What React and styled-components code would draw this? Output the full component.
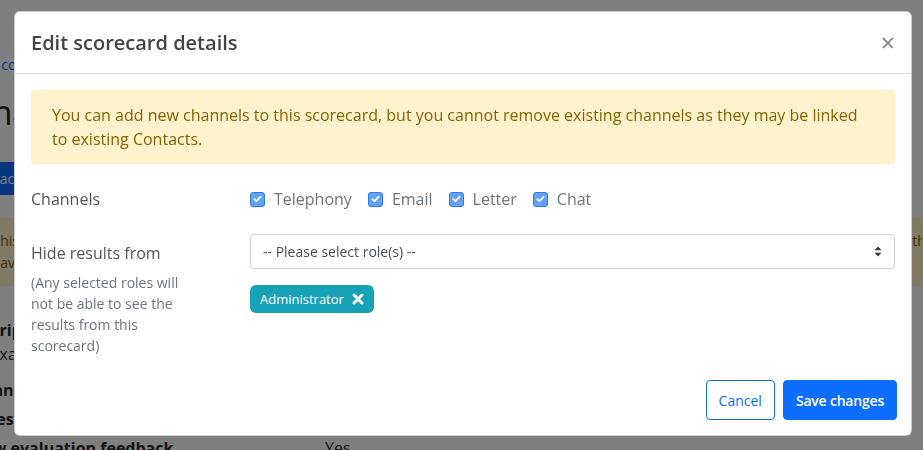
import React from "react";
import styled, { createGlobalStyle } from "styled-components";

const Global = createGlobalStyle`
  html, body { margin: 0; padding: 0; }
  body {
    font-family: "Open Sans", "Liberation Sans", sans-serif;
    color: #212529;
    background: #fff;
    overflow: hidden;
    width: 923px;
    height: 450px;
  }
`;

/* ---------- background page ---------- */
const Page = styled.div`
  margin-left: -38px;
  display: flex;
  flex-direction: column;
  align-items: flex-start;
`;
const BackLink = styled.a`
  margin-top: 54px;
  font-size: 14px;
  line-height: 21px;
  color: #0d6efd;
  text-decoration: none;
`;
const PageTitle = styled.h1`
  margin: 16px 0 0;
  font-size: 34px;
  line-height: 42px;
  font-weight: 500;
  color: #212529;
`;
const PageButton = styled.button`
  margin-top: 29px;
  height: 33px;
  padding: 0 12px;
  border: 0;
  border-radius: 4px;
  background: #0d6efd;
  color: #fff;
  font: 14px/21px "Open Sans", sans-serif;
`;
const PageAlert = styled.div`
  align-self: stretch;
  margin-top: 23px;
  padding: 11px 20px 11px 20px;
  background: #fff3cd;
  border: 1px solid #ffeeba;
  color: #856404;
  font-size: 14px;
  line-height: 22px;
  white-space: nowrap;
  overflow: hidden;
`;
const Details = styled.div`
  margin-top: 32px;
  font-size: 16px;
  line-height: 24px;
`;
const DetailLabel = styled.div`
  font-weight: 700;
`;
const DetailText = styled.div`
  margin-bottom: 12px;
`;
const DetailGrid = styled.div`
  display: grid;
  grid-template-columns: 363px auto;
  row-gap: 5px;
  font-size: 16px;
  line-height: 24px;
`;

/* ---------- modal ---------- */
const Backdrop = styled.div`
  position: fixed;
  inset: 0;
  background: rgba(0, 0, 0, 0.5);
  display: flex;
  align-items: flex-start;
  padding: 11px 0 0 14px;
`;
const Modal = styled.div`
  width: 898px;
  box-sizing: border-box;
  background: #fff;
  border: 1px solid rgba(0, 0, 0, 0.2);
  border-radius: 6px;
  display: flex;
  flex-direction: column;
`;
const Header = styled.div`
  display: flex;
  align-items: center;
  justify-content: space-between;
  padding: 16px 16px 15px;
  border-bottom: 1px solid #dee2e6;
`;
const Title = styled.h5`
  margin: 0;
  font-size: 20px;
  line-height: 30px;
  font-weight: 600;
  color: #444;
`;
const Close = styled.button`
  border: 0;
  background: none;
  padding: 0;
  margin-top: -3px;
  font: 400 25px/30px "Open Sans", sans-serif;
  color: #808080;
  cursor: pointer;
`;
const Body = styled.div`
  padding: 16px 16px 16px;
`;
const Alert = styled.div`
  padding: 12px 20px;
  background: #fff3cd;
  border: 1px solid #ffeeba;
  border-radius: 4px;
  color: #856404;
  font-size: 16px;
  line-height: 24px;
  margin-bottom: 16px;
`;
const FormRow = styled.div`
  display: grid;
  grid-template-columns: 219px 1fr;
  margin-bottom: ${(p) => (p.$last ? 0 : "16px")};
`;
const LabelCol = styled.div`
  display: flex;
  flex-direction: column;
`;
const Label = styled.label`
  padding: 7px 0;
  font-size: 16px;
  line-height: 24px;
  color: #555;
`;
const Help = styled.div`
  width: 160px;
  font-size: 14px;
  line-height: 21px;
  color: #6c757d;
`;
const Checks = styled.div`
  display: flex;
  align-items: center;
  gap: 16px;
  padding: 7px 0;
  height: 24px;
`;
const Check = styled.label`
  display: flex;
  align-items: center;
  gap: 9px;
  font-size: 16px;
  line-height: 24px;
  color: #6c757d;
`;
const Box = styled.span`
  width: 15px;
  height: 15px;
  box-sizing: border-box;
  border: 1px solid #2f7be8;
  border-radius: 3px;
  background: #62a1f5;
  display: flex;
  align-items: center;
  justify-content: center;
`;
const Controls = styled.div`
  display: flex;
  flex-direction: column;
  align-items: flex-start;
  gap: 16px;
`;
const Select = styled.div`
  align-self: stretch;
  box-sizing: border-box;
  height: 35px;
  padding: 6px 12px;
  border: 1px solid #ced4da;
  border-radius: 4px;
  display: flex;
  align-items: center;
  justify-content: space-between;
  font-size: 14px;
  line-height: 21px;
  color: #495057;
`;
const Badge = styled.span`
  display: inline-flex;
  align-items: center;
  gap: 8px;
  height: 28px;
  box-sizing: border-box;
  padding: 0 10px;
  border-radius: 6px;
  background: #17a2b8;
  color: #fff;
  font-size: 13px;
  font-weight: 500;
`;
const Footer = styled.div`
  display: flex;
  justify-content: flex-end;
  gap: 8px;
  padding: 8px 14px 15px 16px;
`;
const Button = styled.button`
  height: 40px;
  box-sizing: border-box;
  padding: 0 12px;
  border-radius: 4px;
  border: 1px solid #0d6efd;
  background: ${(p) => (p.$primary ? "#0d6efd" : "#fff")};
  color: ${(p) => (p.$primary ? "#fff" : "#0d6efd")};
  font: ${(p) => (p.$primary ? 600 : 500)} 14px/21px "Open Sans", sans-serif;
  letter-spacing: ${(p) => (p.$primary ? "-0.2px" : "0")};
  cursor: pointer;
`;

const CheckIcon = () => (
  <svg width="9" height="8" viewBox="0 0 9 8">
    <path d="M1.3 4.2 L3.5 6.2 L7.7 1.6" fill="none" stroke="#fff" strokeWidth="1.8" strokeLinecap="round" strokeLinejoin="round" />
  </svg>
);

const Caret = () => (
  <svg width="8" height="11" viewBox="0 0 8 11">
    <path d="M4 0.5 L7.5 4.3 H0.5 Z M4 10.5 L7.5 6.7 H0.5 Z" fill="#343a40" />
  </svg>
);

const XIcon = () => (
  <svg width="12" height="12" viewBox="0 0 12 12">
    <path d="M2 2 L10 10 M10 2 L2 10" stroke="#fff" strokeWidth="2.9" strokeLinecap="round" />
  </svg>
);

const channels = ["Telephony", "Email", "Letter", "Chat"];

export default function App() {
  return (
    <>
      <Global />
      <Page>
        <BackLink href="#">Go to contacts list</BackLink>
        <PageTitle>Email quality scorecard</PageTitle>
        <PageButton>Extract results</PageButton>
        <PageAlert>
          If this scorecard is changed, existing evaluations will keep their original answers and the results will be recalculated where they are available in the reports.
          <br />
          unavailable evaluations are not affected.
        </PageAlert>
        <Details>
          <DetailLabel>Description</DetailLabel>
          <DetailText>For example, quality checks for email contacts</DetailText>
        </Details>
        <DetailGrid>
          <DetailLabel>Channels</DetailLabel>
          <span>Telephony, Email, Letter, Chat</span>
          <DetailLabel>Scores</DetailLabel>
          <span>Percentage</span>
          <DetailLabel>Allow evaluation feedback</DetailLabel>
          <span>Yes</span>
        </DetailGrid>
      </Page>

      <Backdrop>
        <Modal>
          <Header>
            <Title>Edit scorecard details</Title>
            <Close aria-label="Close">×</Close>
          </Header>
          <Body>
            <Alert>
              You can add new channels to this scorecard, but you cannot remove existing channels as they may be linked to existing Contacts.
            </Alert>
            <FormRow>
              <LabelCol>
                <Label>Channels</Label>
              </LabelCol>
              <Checks>
                {channels.map((c) => (
                  <Check key={c}>
                    <Box>
                      <CheckIcon />
                    </Box>
                    {c}
                  </Check>
                ))}
              </Checks>
            </FormRow>
            <FormRow $last>
              <LabelCol>
                <Label>Hide results from</Label>
                <Help>(Any selected roles will not be able to see the results from this scorecard)</Help>
              </LabelCol>
              <Controls>
                <Select>
                  <span>-- Please select role(s) --</span>
                  <Caret />
                </Select>
                <Badge>
                  Administrator
                  <XIcon />
                </Badge>
              </Controls>
            </FormRow>
          </Body>
          <Footer>
            <Button>Cancel</Button>
            <Button $primary>Save changes</Button>
          </Footer>
        </Modal>
      </Backdrop>
    </>
  );
}
